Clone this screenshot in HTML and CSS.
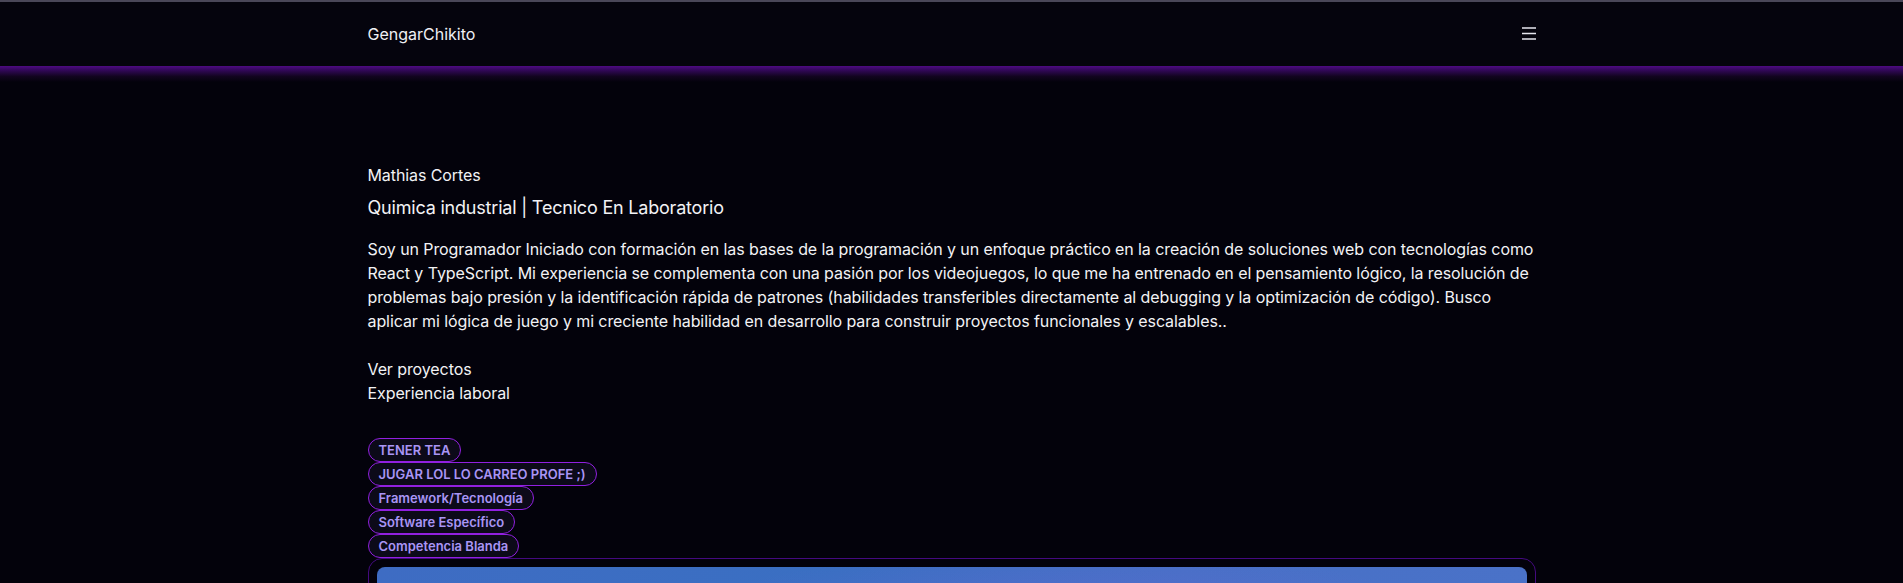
FILE: index.html
```html
<!DOCTYPE html>
<html lang="es">
<head>
<meta charset="utf-8">
<title>GengarChikito</title>
<link rel="stylesheet" href="styles.css">
</head>
<body>
<header class="topbar">
  <div class="container nav">
    <span class="brand">GengarChikito</span>
    <button class="menu" aria-label="Menu">
      <svg width="14" height="13" viewBox="0 0 14 13"><path d="M0 1h14M0 6.5h14M0 12h14" stroke="#e6e6ee" stroke-width="1.4"/></svg>
    </button>
  </div>
</header>
<div class="glow"></div>
<main class="container hero">
  <h1 class="name">Mathias Cortes</h1>
  <h2 class="role">Quimica industrial | Tecnico En Laboratorio</h2>
  <p class="bio">Soy un Programador Iniciado con formación en las bases de la programación y un enfoque práctico en la creación de soluciones web con tecnologías como React y TypeScript. Mi experiencia se complementa con una pasión por los videojuegos, lo que me ha entrenado en el pensamiento lógico, la resolución de problemas bajo presión y la identificación rápida de patrones (habilidades transferibles directamente al debugging y la optimización de código). Busco aplicar mi lógica de juego y mi creciente habilidad en desarrollo para construir proyectos funcionales y escalables..</p>
  <nav class="links">
    <a href="#">Ver proyectos</a>
    <a href="#">Experiencia laboral</a>
  </nav>
  <ul class="tags">
    <li class="tag">TENER TEA</li>
    <li class="tag">JUGAR LOL LO CARREO PROFE ;)</li>
    <li class="tag">Framework/Tecnología</li>
    <li class="tag">Software Específico</li>
    <li class="tag">Competencia Blanda</li>
  </ul>
  <div class="card">
    <div class="card-img"></div>
  </div>
</main>
</body>
</html>
```
FILE: styles.css
```css
* { box-sizing: border-box; }
html, body { margin: 0; padding: 0; }
body {
  background: #03020b;
  color: #f2f2f5;
  font-family: Inter, "Noto Sans", sans-serif;
  font-size: 16px;
  line-height: 24px;
  letter-spacing: -0.09px;
  border-top: 2px solid #4a4758;
  overflow: hidden;
}
.container {
  width: 1168px;
  margin: 0 auto;
}
.topbar {
  background: #05040d;
  height: 64px;
}
.nav {
  height: 64px;
  display: flex;
  align-items: center;
  justify-content: space-between;
}
.brand {
  font-size: 16px;
  color: #f0f0f4;
  letter-spacing: 0;
}
.menu {
  background: none;
  border: 0;
  padding: 0;
  display: flex;
  margin-top: -1px;
}
.glow {
  height: 16px;
  background: linear-gradient(#4e0b82 0%, #33085a 25%, #12041f 65%, #03020b 100%);
}
.hero {
  padding-top: 81px;
}
.name {
  margin: 0;
  font-size: 16px;
  font-weight: 400;
  line-height: 24px;
}
.role {
  margin: 7px 0 15px;
  font-size: 18px;
  font-weight: 400;
  line-height: 28px;
  letter-spacing: -0.2px;
}
.bio {
  margin: 0 0 24px;
  font-size: 16px;
  line-height: 24px;
}
.links {
  display: flex;
  flex-direction: column;
  align-items: flex-start;
}
.links a {
  color: #f2f2f5;
  text-decoration: none;
}
.tags {
  list-style: none;
  margin: 33px 0 0;
  padding: 0;
  display: flex;
  flex-direction: column;
  align-items: flex-start;
}
.tag {
  font-size: 13px;
  font-weight: 600;
  line-height: 20px;
  letter-spacing: 0;
  padding: 1px 10px;
  border: 1px solid #9120e0;
  border-radius: 999px;
  color: #a995f5;
  background: #0c0a19;
}
.card {
  border: 1px solid #440a80;
  border-radius: 14px;
  padding: 8px;
  height: 200px;
}
.card-img {
  height: 200px;
  border-radius: 8px;
  background:
    radial-gradient(ellipse at 60% 30%, rgba(120,100,220,0.35), transparent 40%),
    linear-gradient(90deg, #3e6cc3 0%, #3a6fc2 40%, #4770c6 70%, #4a72c8 100%);
}
```
